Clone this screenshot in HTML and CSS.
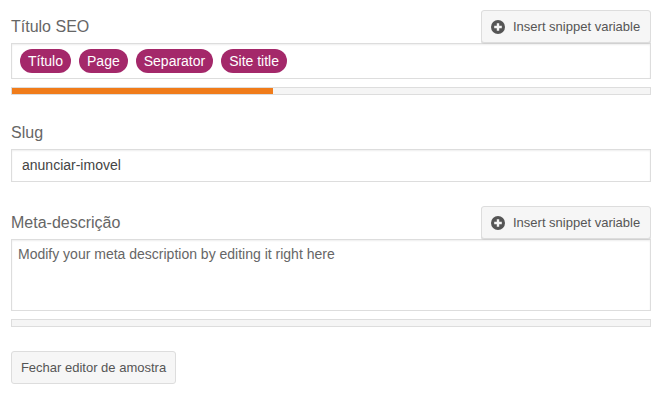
FILE: index.html
```html
<!DOCTYPE html>
<html lang="pt">
<head>
    <meta charset="UTF-8">
    <meta name="viewport" content="width=device-width, initial-scale=1.0">
    <title>Editor de amostra</title>
    <link rel="stylesheet" href="styles.css">
</head>
<body>
    <main class="editor">
        <section class="field field-title">
            <div class="field-head">
                <label class="field-label">Título SEO</label>
                <button class="btn btn-snippet">
                    <svg class="icon" viewBox="0 0 14 14" width="14" height="14"><circle cx="7" cy="7" r="7" fill="#555"/><path d="M7 3.2v7.6M3.2 7h7.6" stroke="#f5f5f5" stroke-width="2.4"/></svg>
                    <span>Insert snippet variable</span>
                </button>
            </div>
            <div class="input-box tags">
                <span class="tag">Título</span>
                <span class="tag">Page</span>
                <span class="tag">Separator</span>
                <span class="tag">Site title</span>
            </div>
            <div class="progress"><div class="progress-bar" style="width: 40.9%"></div></div>
        </section>

        <section class="field field-slug">
            <label class="field-label">Slug</label>
            <div class="input-box slug">anunciar-imovel</div>
        </section>

        <section class="field field-meta">
            <div class="field-head">
                <label class="field-label">Meta-descrição</label>
                <button class="btn btn-snippet">
                    <svg class="icon" viewBox="0 0 14 14" width="14" height="14"><circle cx="7" cy="7" r="7" fill="#555"/><path d="M7 3.2v7.6M3.2 7h7.6" stroke="#f5f5f5" stroke-width="2.4"/></svg>
                    <span>Insert snippet variable</span>
                </button>
            </div>
            <div class="input-box description">Modify your meta description by editing it right here</div>
            <div class="progress"></div>
        </section>

        <button class="btn btn-close">Fechar editor de amostra</button>
    </main>
</body>
</html>
```
FILE: styles.css
```css
body {
    font-family: "Liberation Sans", Arial, sans-serif;
    margin: 0;
    padding: 0;
    background-color: #fff;
    color: #444;
}
.editor {
    padding: 10px 19px 0 11px;
}
.field-head {
    display: flex;
    justify-content: space-between;
    align-items: center;
}
.field-label {
    font-size: 16px;
    line-height: 20px;
    color: #666;
}
.btn {
    font-family: inherit;
    font-size: 13px;
    color: #555;
    background-color: #f6f6f6;
    border: 1px solid #ddd;
    border-radius: 3px;
    cursor: pointer;
    white-space: nowrap;
}
.btn-snippet {
    display: flex;
    align-items: center;
    gap: 8px;
    width: 170px;
    height: 33px;
    padding: 0 9px;
    box-shadow: 0 1px 0 rgba(204, 204, 204, 0.7);
}
.icon {
    flex-shrink: 0;
}
.input-box {
    box-sizing: border-box;
    border: 1px solid #ddd;
    box-shadow: inset 0 1px 2px rgba(0, 0, 0, 0.07);
}
.tags {
    display: flex;
    align-items: center;
    gap: 8px;
    height: 36px;
    padding: 0 8px;
}
.tag {
    font-size: 14px;
    line-height: 24px;
    color: #fff;
    background-color: #a4286a;
    border-radius: 12px;
    padding: 0 8px;
}
.progress {
    box-sizing: border-box;
    height: 8px;
    margin-top: 8px;
    background-color: #f5f5f5;
    border: 1px solid #ddd;
}
.progress-bar {
    height: 100%;
    background-color: #f07c1a;
}
.field-slug {
    margin-top: 28px;
}
.field-slug .field-label {
    display: block;
    margin-bottom: 6px;
}
.slug {
    height: 33px;
    padding: 0 10px;
    font-size: 14px;
    line-height: 31px;
}
.field-meta {
    margin-top: 24px;
}
.description {
    height: 72px;
    padding: 6px;
    font-size: 14px;
    line-height: 17px;
    color: #666;
}
.btn-close {
    display: block;
    width: 165px;
    height: 33px;
    margin-top: 24px;
    padding: 0;
}
```
